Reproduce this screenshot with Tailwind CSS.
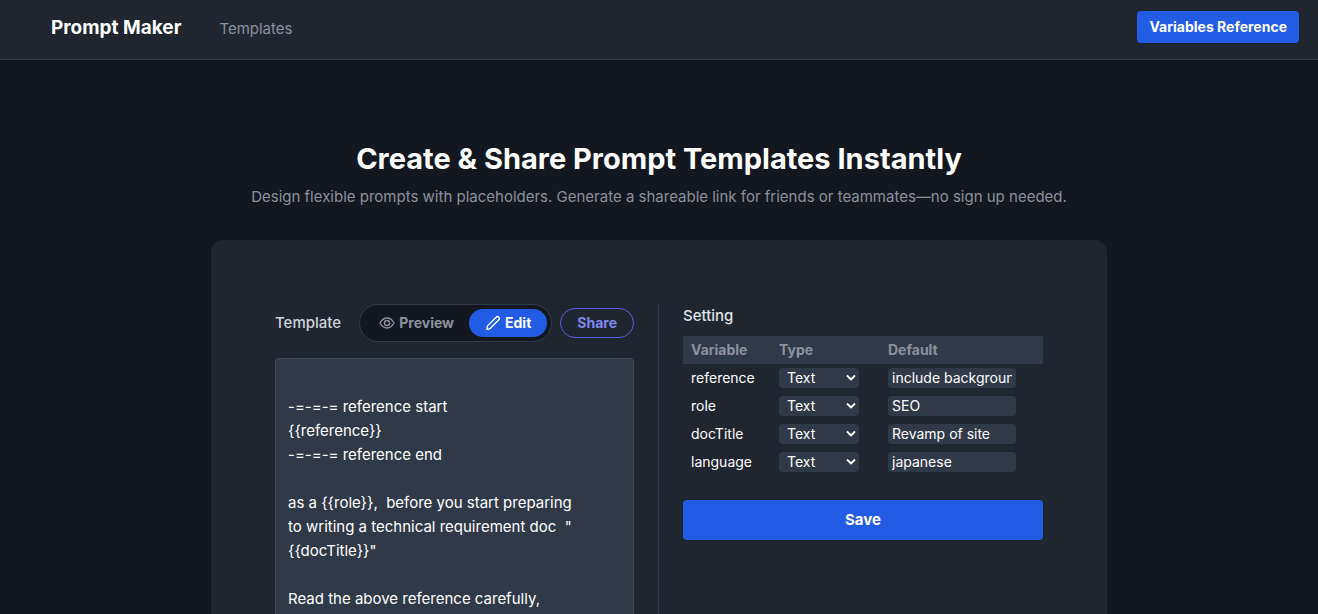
<!DOCTYPE html>
<html lang="en">
<head>
<meta charset="utf-8">
<meta name="viewport" content="width=device-width, initial-scale=1">
<title>Prompt Maker</title>
<script src="https://cdn.jsdelivr.net/npm/@tailwindcss/browser@4"></script>
</head>
<body class="min-h-screen bg-[#131720] font-['Inter','Liberation_Sans',sans-serif] text-[15px] leading-6 text-white antialiased">
<header class="border-b border-[#323c49] bg-[#1f2630]">
  <nav class="flex items-start justify-between pt-[11px] pr-[19px] pb-[15px] pl-[51px]">
    <div class="flex items-center gap-[38px] pt-px">
      <a href="#" class="text-[19px] leading-8 font-bold">Prompt Maker</a>
      <a href="#templates" class="pt-0.5 text-[#8b919d]">Templates</a>
    </div>
    <button type="button" class="h-8 rounded bg-[#225ce5] px-3 text-[14px] font-bold">Variables Reference</button>
  </nav>
</header>
<main class="mx-auto max-w-4xl pt-[81px] pb-16">
  <div class="text-center">
    <h1 class="text-[29px] leading-9 font-bold">Create &amp; Share Prompt Templates Instantly</h1>
    <p class="mt-2 text-[#8b919d]">Design flexible prompts with placeholders. Generate a shareable link for friends or teammates—no sign up needed.</p>
  </div>
  <section class="mt-[31px] rounded-xl bg-[#1f2630] p-8">
    <div class="grid grid-cols-2 rounded-lg p-8">
      <div class="min-w-0 border-r border-[#323c49] pr-6">
        <div class="flex items-center justify-between">
          <label for="template" class="font-medium text-[#d1d4da]">Template</label>
          <div class="flex items-center gap-2">
            <div class="flex rounded-full border border-[#323c49] bg-[#131720] p-1 text-[14px] leading-5 font-bold">
              <button type="button" class="flex items-center gap-1 rounded-full px-[15px] py-1 text-[#8b919d]">
                <svg class="size-4" viewBox="0 0 24 24" fill="none" stroke="currentColor" stroke-width="2" stroke-linecap="round" stroke-linejoin="round" aria-hidden="true"><path d="M1.500 12C4.500 6.500 8 4.500 12 4.500S19.500 6.500 22.500 12C19.500 17.500 16 19.500 12 19.500S4.500 17.500 1.500 12Z"/><circle cx="12" cy="12" r="3.800"/></svg>
                Preview
              </button>
              <button type="button" class="flex items-center gap-1 rounded-full bg-[#225ce5] px-4 py-1">
                <svg class="size-4" viewBox="0 0 24 24" fill="none" stroke="currentColor" stroke-width="2" stroke-linecap="round" stroke-linejoin="round" aria-hidden="true"><path d="M16.800 3.300a2.750 2.750 0 0 1 3.900 3.900L8 19.900Q7.200 20.700 6 21L2.800 21.700 3.300 18Q3.500 16.600 4.500 15.600Z"/></svg>
                Edit
              </button>
            </div>
            <button type="button" class="rounded-full border border-[#5b5be0] px-4 py-1 text-[14px] leading-5 font-bold text-[#7f88f0]">Share</button>
          </div>
        </div>
        <textarea id="template" class="mt-4 block h-96 w-full resize-none overflow-hidden rounded-sm border border-[#424b58] bg-[#303947] p-3 outline-none">

-=-=-= reference start
{{reference}}
-=-=-= reference end

as a {{role}},  before you start preparing
to writing a technical requirement doc  "
{{docTitle}}"

Read the above reference carefully,
</textarea>
      </div>
      <div class="min-w-0 pl-6">
        <h2 class="font-medium text-[#dfe1e5]">Setting</h2>
        <table class="mt-2 w-full table-fixed text-left text-[14px] leading-5">
          <colgroup><col class="w-[88px]"><col class="w-[109px]"><col></colgroup>
          <thead class="bg-[#303947] text-[#8b919d]">
            <tr><th class="px-2 py-1 font-bold">Variable</th><th class="px-2 py-1 font-bold">Type</th><th class="px-2 py-1 font-bold">Default</th></tr>
          </thead>
          <tbody>
            <tr class="h-7">
              <td class="pl-2">reference</td>
              <td class="pl-2"><div class="relative w-20"><select aria-label="Type of reference" class="block h-5 w-full appearance-none rounded bg-[#303947] pl-2 leading-5"><option>Text</option></select><svg class="pointer-events-none absolute top-[6px] right-[3px] h-[7px] w-[10px]" viewBox="0 0 10 7" fill="none" stroke="currentColor" stroke-width="1.8" aria-hidden="true"><path d="M1 1.500 5 5.500 9 1.500"/></svg></div></td>
              <td class="pl-2"><input aria-label="Default of reference" value="include background" class="block h-5 w-32 rounded bg-[#303947] px-1 outline-none"></td>
            </tr>
            <tr class="h-7">
              <td class="pl-2">role</td>
              <td class="pl-2"><div class="relative w-20"><select aria-label="Type of role" class="block h-5 w-full appearance-none rounded bg-[#303947] pl-2 leading-5"><option>Text</option></select><svg class="pointer-events-none absolute top-[6px] right-[3px] h-[7px] w-[10px]" viewBox="0 0 10 7" fill="none" stroke="currentColor" stroke-width="1.8" aria-hidden="true"><path d="M1 1.500 5 5.500 9 1.500"/></svg></div></td>
              <td class="pl-2"><input aria-label="Default of role" value="SEO" class="block h-5 w-32 rounded bg-[#303947] px-1 outline-none"></td>
            </tr>
            <tr class="h-7">
              <td class="pl-2">docTitle</td>
              <td class="pl-2"><div class="relative w-20"><select aria-label="Type of docTitle" class="block h-5 w-full appearance-none rounded bg-[#303947] pl-2 leading-5"><option>Text</option></select><svg class="pointer-events-none absolute top-[6px] right-[3px] h-[7px] w-[10px]" viewBox="0 0 10 7" fill="none" stroke="currentColor" stroke-width="1.8" aria-hidden="true"><path d="M1 1.500 5 5.500 9 1.500"/></svg></div></td>
              <td class="pl-2"><input aria-label="Default of docTitle" value="Revamp of site" class="block h-5 w-32 rounded bg-[#303947] px-1 outline-none"></td>
            </tr>
            <tr class="h-7">
              <td class="pl-2">language</td>
              <td class="pl-2"><div class="relative w-20"><select aria-label="Type of language" class="block h-5 w-full appearance-none rounded bg-[#303947] pl-2 leading-5"><option>Text</option></select><svg class="pointer-events-none absolute top-[6px] right-[3px] h-[7px] w-[10px]" viewBox="0 0 10 7" fill="none" stroke="currentColor" stroke-width="1.8" aria-hidden="true"><path d="M1 1.500 5 5.500 9 1.500"/></svg></div></td>
              <td class="pl-2"><input aria-label="Default of language" value="japanese" class="block h-5 w-32 rounded bg-[#303947] px-1 outline-none"></td>
            </tr>
          </tbody>
        </table>
        <button type="button" class="mt-6 w-full rounded bg-[#225ce5] py-2 font-bold">Save</button>
      </div>
    </div>
  </section>
</main>
</body>
</html>
